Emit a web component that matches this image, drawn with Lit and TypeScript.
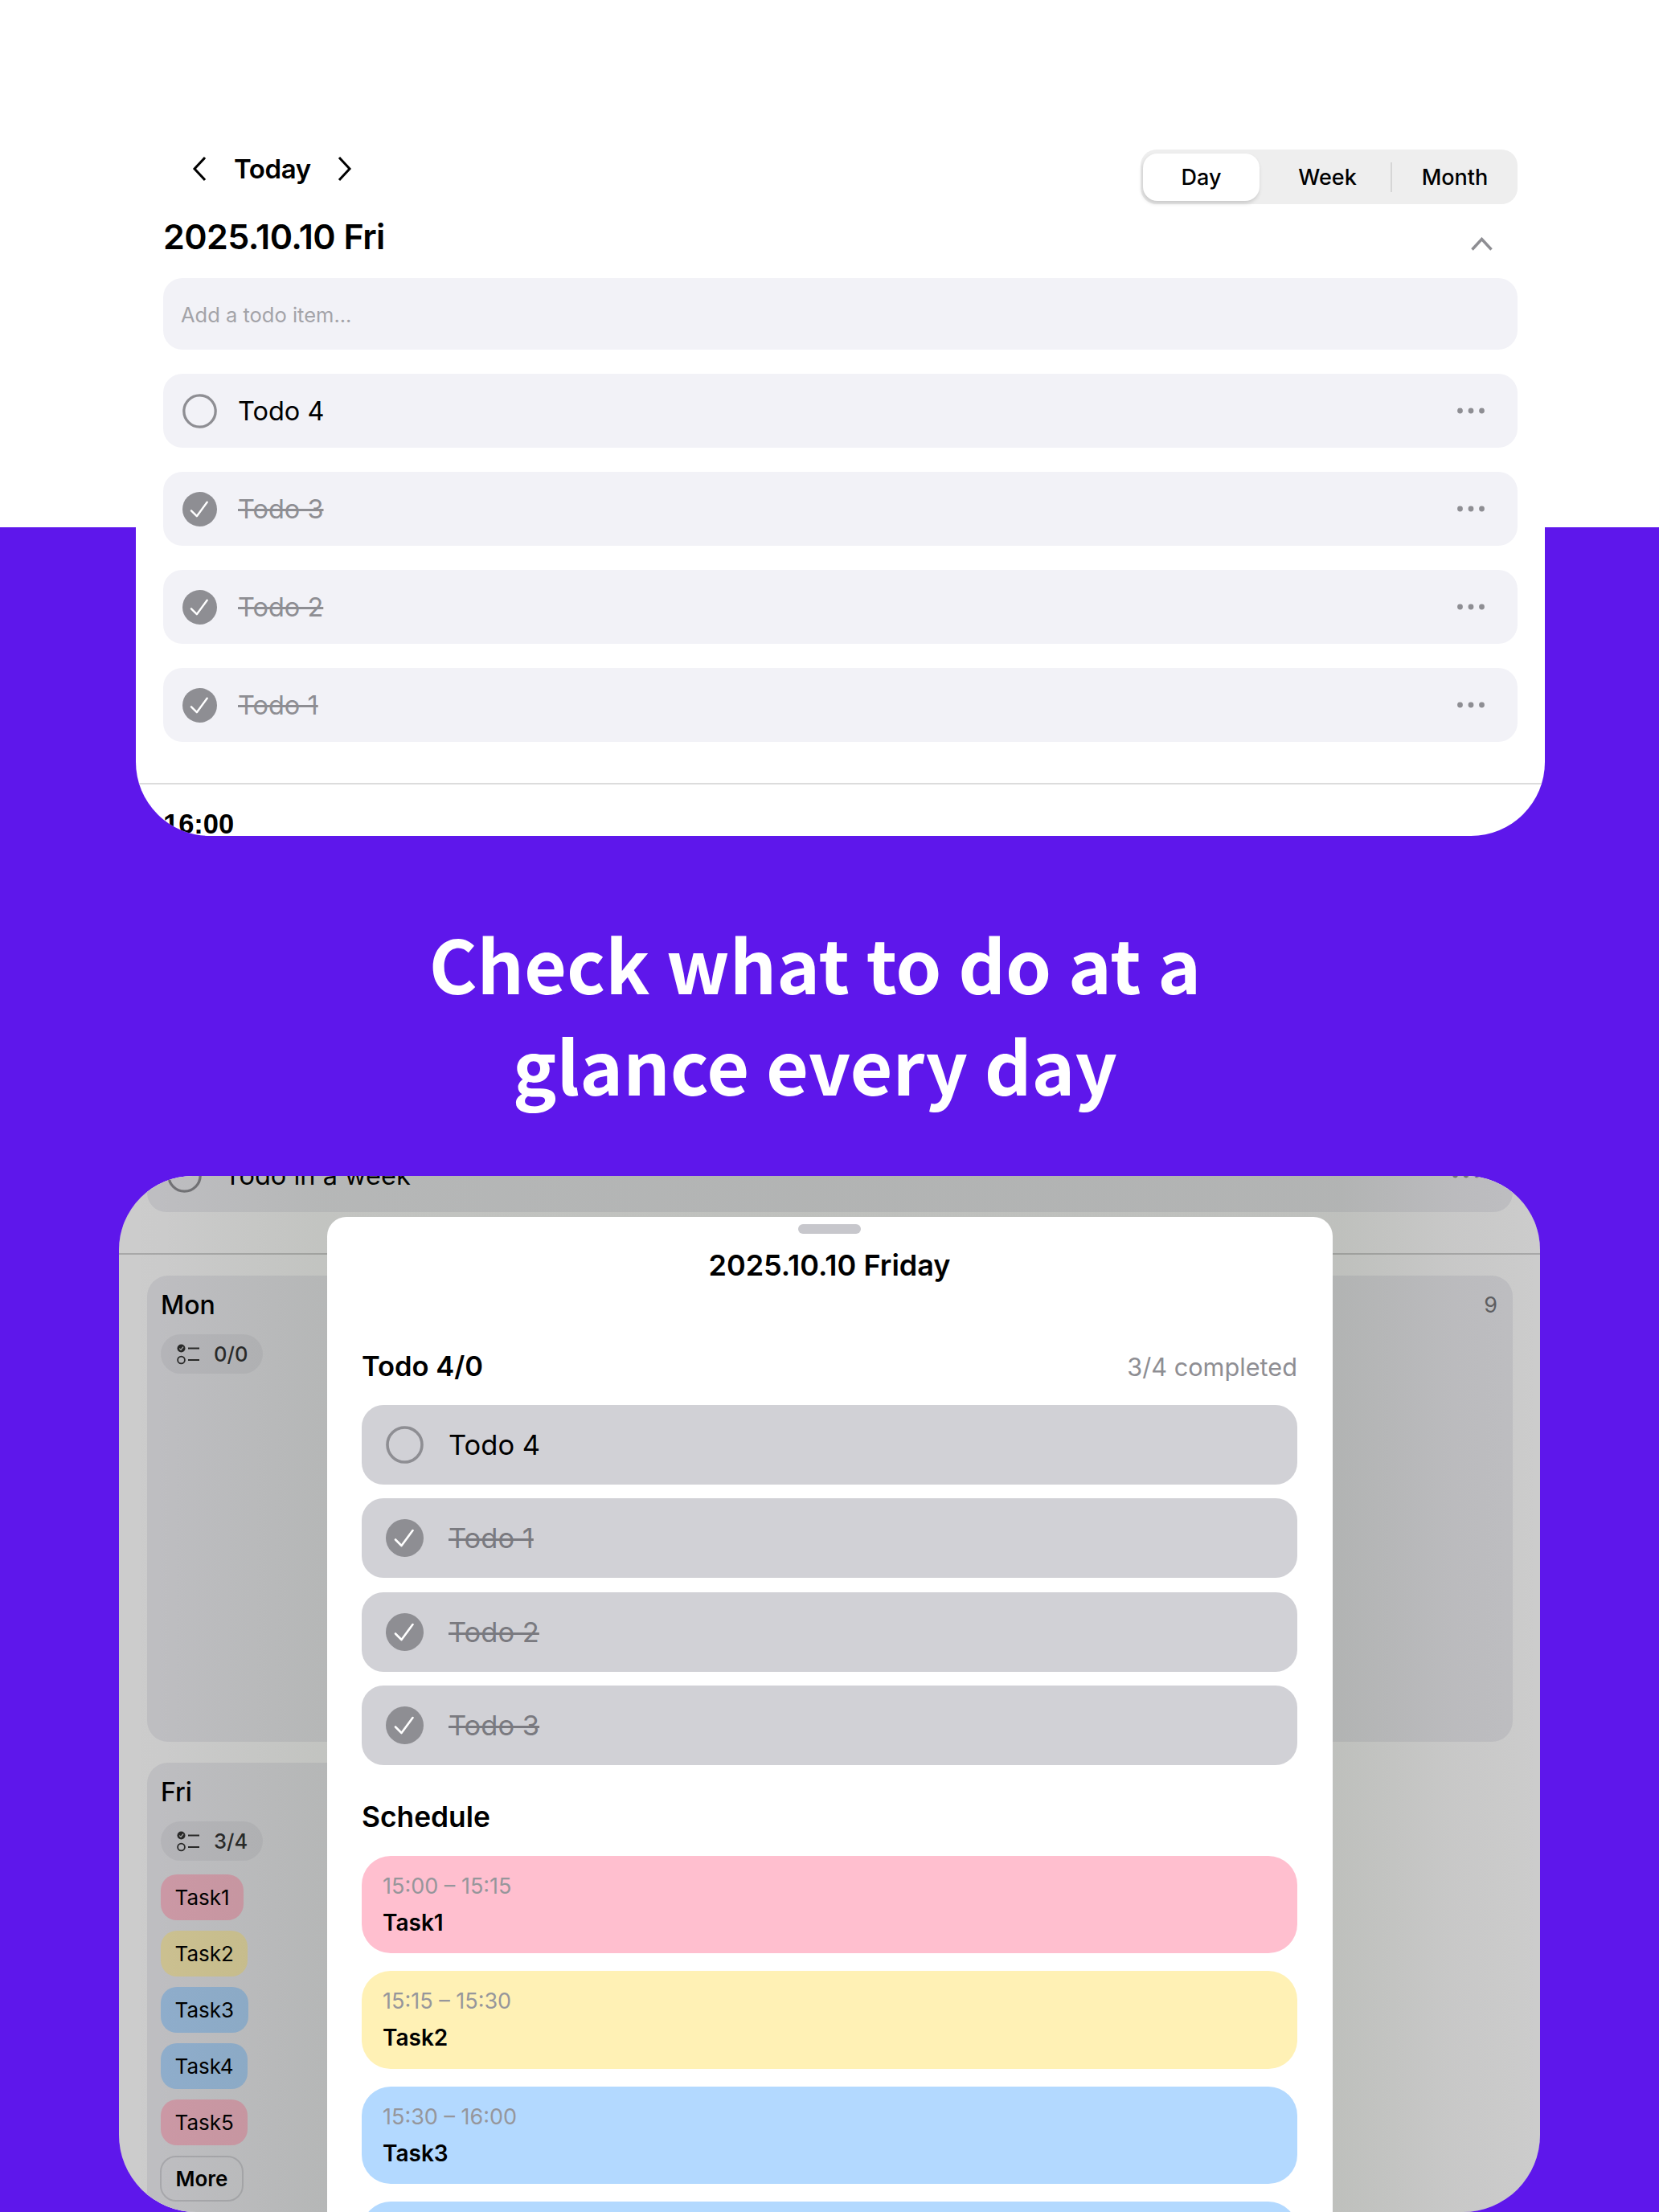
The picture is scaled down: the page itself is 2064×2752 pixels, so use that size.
import { LitElement, html, css, svg } from "lit";
import { customElement } from "lit/decorators.js";

const checkMark = svg`<path d="M12.5 26.5 L20 34 L34 15" fill="none" stroke="#fff" stroke-width="2.6" stroke-linecap="round" stroke-linejoin="round" transform="translate(-.5 -1)"/>`;

function bullet(done: boolean) {
  return done
    ? html`<svg class="bullet" viewBox="0 0 47 47"><circle cx="23.5" cy="23.5" r="23.5" fill="#8e8e93"></circle>${checkMark}</svg>`
    : html`<svg class="bullet" viewBox="0 0 47 47"><circle cx="23.5" cy="23.5" r="21.5" fill="none" stroke="#8e8e93" stroke-width="3.6"></circle></svg>`;
}

const dots = html`<svg class="dots" viewBox="0 0 34 8"><circle cx="3.5" cy="4" r="3.4"></circle><circle cx="17" cy="4" r="3.4"></circle><circle cx="30.5" cy="4" r="3.4"></circle></svg>`;

const tally = html`<svg class="tally" viewBox="0 0 28 27">
  <circle cx="5.5" cy="6.5" r="5" fill="#333"></circle>
  <path d="M3.2 6.6 L5 8.4 L8 4.6" fill="none" stroke="#ddd" stroke-width="1.2"></path>
  <path d="M14 6.5 H28 M14 21 H28" stroke="#333" stroke-width="2"></path>
  <circle cx="5.5" cy="21" r="4.4" fill="none" stroke="#333" stroke-width="1.8"></circle>
</svg>`;

@customElement("app-root")
export class AppRoot extends LitElement {
  static styles = css`
    :host {
      display: block;
      width: 2064px;
      height: 2752px;
      overflow: hidden;
      background: linear-gradient(#fff 656px, #5e17eb 656px);
      font-family: Inter, "Noto Sans", sans-serif;
      color: #000;
    }
    * { box-sizing: border-box; }

    /* top card */
    .card {
      width: 1753px;
      height: 1040px;
      margin-left: 169px;
      padding: 186px 34px 0;
      background: #fff;
      border-radius: 0 0 92px 92px;
      overflow: hidden;
    }
    .head { display: flex; justify-content: space-between; height: 160px; }
    .head-left, .head-right { display: flex; flex-direction: column; }
    .nav { display: flex; align-items: center; height: 48px; margin-left: 36px; }
    .nav svg { width: 18px; height: 32px; }
    .nav span { margin: 0 33px 0 34px; font-size: 33px; font-weight: 600; letter-spacing: -0.4px; }
    .date { margin-top: 32px; font-size: 43px; line-height: 56px; font-weight: 600; letter-spacing: -0.55px; }
    .segment {
      display: flex;
      align-items: center;
      width: 469px;
      height: 68px;
      padding: 0 0 0 3px;
      background: #eeeeee;
      border-radius: 20px;
      font-size: 27px;
      font-weight: 500;
    }
    .seg { text-align: center; line-height: 59px; }
    .seg.day { width: 145px; height: 59px; background: #fff; border-radius: 18px; box-shadow: -1px 3px 5px rgba(0,0,0,.16); }
    .seg.week { width: 157px; margin-left: 6px; }
    .seg.month { flex: 1; }
    .sep { width: 2px; height: 37px; background: #d6d6d6; }
    .collapse { width: 27px; height: 17px; margin: 41px 31px 0 0; align-self: flex-end; }
    .add {
      display: flex;
      align-items: center;
      height: 89px;
      padding: 2px 0 0 22px;
      background: #f2f2f7;
      border-radius: 24px;
      font-size: 25.5px;
      color: #a3a3a8;
    }
    .list { display: flex; flex-direction: column; gap: 30px; margin-top: 30px; }
    .row {
      display: flex;
      align-items: center;
      height: 92px;
      padding: 0 41px 0 24px;
      gap: 26px;
      background: #f2f2f7;
      border-radius: 24px;
      font-size: 32.5px;
    }
    .row .bullet { width: 43px; height: 43px; flex: none; }
    .done { color: #8e8e93; text-decoration: line-through; text-decoration-thickness: 2.5px; }
    .dots { width: 34px; height: 8px; margin-left: auto; fill: #8e8e93; }
    .rule { height: 2px; background: #dcdcdc; }
    .card .rule { margin: 51px -34px 0; }
    .hour { margin-top: 27px; font-family: "Liberation Sans", Arial, sans-serif; font-size: 34.5px; line-height: 44px; font-weight: 700; }

    /* headline */
    .headline {
      height: 423px;
      padding: 94px 36px 0 0;
      text-align: center;
      color: #fff;
      font-family: "Noto Sans CJK KR", "Noto Sans", sans-serif;
      font-size: 91.3px;
      line-height: 126px;
      font-weight: 700;
    }

    /* tablet */
    .tablet {
      position: relative;
      width: 1768px;
      height: 1289px;
      margin-left: 148px;
      padding: 0 34px 0 35px;
      background: #fff;
      border-radius: 92px 92px 96px 96px;
      overflow: hidden;
    }
    .tablet > .row { margin-top: -47px; padding-left: 25px; gap: 28px; background: #eeeef2; }
    .tablet > .rule { margin: 51px -34px 0 -35px; background: #d2d2d2; }
    .cell { margin-top: 26px; padding: 16px 16px 16px 17px; background: #eeeef2; border-radius: 26px; }
    .cell.mon { display: flex; justify-content: space-between; height: 580px; }
    .cell.fri { width: 800px; height: 700px; }
    .cell h3 { margin: 0; font-size: 32px; line-height: 42px; font-weight: 500; }
    .num { margin-right: 3px; font-size: 27px; line-height: 42px; color: #76767a; }
    .tally-pill {
      display: inline-flex;
      align-items: center;
      gap: 18px;
      height: 49px;
      margin-top: 15px;
      padding: 0 19px 0 20px;
      border-radius: 25px;
      background: #e2e2e7;
      color: #333;
      font-size: 25.5px;
      font-weight: 500;
    }
    .tally { width: 28px; height: 27px; }
    .chips { display: flex; flex-direction: column; align-items: flex-start; gap: 13px; margin-top: 17px; }
    .chip { height: 57px; padding: 0 17.5px; border-radius: 20px; font-size: 26px; line-height: 57px; }
    .chip.more { margin-left: -1px; border: 2px solid #d1d1d6; background: transparent; font-weight: 600; line-height: 53px; }
    .pink { background: #ffbfcf; }
    .yellow { background: #fff1b5; }
    .blue { background: #b3d9ff; }

    .scrim {
      position: absolute;
      inset: 0;
      background: linear-gradient(90deg,
        rgba(0,0,0,.2) 0%, rgba(0,0,0,.205) 3%, rgba(14,20,8,.25) 14%,
        rgba(14,20,8,.265) 50%, rgba(14,20,8,.265) 86%, rgba(10,10,8,.225) 94%, rgba(0,0,0,.2) 100%);
    }
    .modal {
      position: absolute;
      left: 259px;
      top: 51px;
      bottom: 0;
      width: 1251px;
      padding: 9px 44px 0 43px;
      background: #fff;
      border-radius: 24px 24px 0 0;
    }
    .handle { width: 78px; height: 12px; margin: 0 auto; border-radius: 6px; background: #c7c7cc; }
    .modal h2 { margin: 16px 0 0; text-align: center; font-size: 36px; line-height: 46px; font-weight: 600; }
    .sect { display: flex; justify-content: space-between; align-items: center; margin-top: 80px; height: 46px; }
    .sect h3 { margin: 0; font-size: 34.5px; line-height: 46px; font-weight: 600; }
    .sched { margin: 42px 0 0; font-size: 35.3px; line-height: 46px; font-weight: 600; }
    .sect span { font-size: 30.7px; color: #8e8e93; }
    .mlist { display: flex; flex-direction: column; gap: 17.3px; margin-top: 25px; }
    .mrow {
      display: flex;
      align-items: center;
      gap: 31px;
      height: 99px;
      padding-left: 30px;
      border-radius: 27px;
      background: #d1d1d6;
      font-size: 34.5px;
    }
    .mrow .bullet { width: 47px; height: 47px; flex: none; }
    .mrow .done { color: #7a7a80; }
    .events { display: flex; flex-direction: column; gap: 22px; margin-top: 25px; }
    .event { height: 121.5px; padding: 21px 26px 0; border-radius: 36px; flex: none; }
    .event .time { font-size: 27px; line-height: 34px; color: #96969b; }
    .event .name { margin-top: 10px; font-size: 28px; line-height: 36px; font-weight: 600; }
  `;

  render() {
    const topTodos = [["Todo 4", false], ["Todo 3", true], ["Todo 2", true], ["Todo 1", true]] as const;
    const modalTodos = [["Todo 4", false], ["Todo 1", true], ["Todo 2", true], ["Todo 3", true]] as const;
    const events = [
      ["15:00 – 15:15", "Task1", "pink"],
      ["15:15 – 15:30", "Task2", "yellow"],
      ["15:30 – 16:00", "Task3", "blue"],
    ];
    const chips = [["Task1", "pink"], ["Task2", "yellow"], ["Task3", "blue"], ["Task4", "blue"], ["Task5", "pink"]];
    return html`
      <section class="card">
        <div class="head">
          <div class="head-left">
            <div class="nav">
              <svg viewBox="0 0 18 32"><path d="M16 2 L3 16 L16 30" fill="none" stroke="#000" stroke-width="3"></path></svg>
              <span>Today</span>
              <svg viewBox="0 0 18 32"><path d="M2 2 L15 16 L2 30" fill="none" stroke="#000" stroke-width="3"></path></svg>
            </div>
            <div class="date">2025.10.10 Fri</div>
          </div>
          <div class="head-right">
            <div class="segment">
              <div class="seg day">Day</div>
              <div class="seg week">Week</div>
              <div class="sep"></div>
              <div class="seg month">Month</div>
            </div>
            <svg class="collapse" viewBox="0 0 27 17"><path d="M1.5 15.5 L13.5 2.5 L25.5 15.5" fill="none" stroke="#8e8e93" stroke-width="3.5"></path></svg>
          </div>
        </div>
        <div class="add">Add a todo item...</div>
        <div class="list">
          ${topTodos.map(([t, d]) => html`<div class="row">${bullet(d)}<span class=${d ? "done" : ""}>${t}</span>${dots}</div>`)}
        </div>
        <div class="rule"></div>
        <div class="hour">16:00</div>
      </section>

      <div class="headline">Check what to do at a<br />glance every day</div>

      <section class="tablet">
        <div class="row">${bullet(false)}<span>Todo in a week</span>${dots}</div>
        <div class="rule"></div>
        <div class="cell mon">
          <div>
            <h3>Mon</h3>
            <div class="tally-pill">${tally}<span>0/0</span></div>
          </div>
          <div class="num">9</div>
        </div>
        <div class="cell fri">
          <h3>Fri</h3>
          <div class="tally-pill">${tally}<span>3/4</span></div>
          <div class="chips">
            ${chips.map(([t, c]) => html`<div class="chip ${c}">${t}</div>`)}
            <div class="chip more">More</div>
          </div>
        </div>
        <div class="scrim"></div>
        <div class="modal">
          <div class="handle"></div>
          <h2>2025.10.10 Friday</h2>
          <div class="sect"><h3>Todo 4/0</h3><span>3/4 completed</span></div>
          <div class="mlist">
            ${modalTodos.map(([t, d]) => html`<div class="mrow">${bullet(d)}<span class=${d ? "done" : ""}>${t}</span></div>`)}
          </div>
          <h3 class="sched">Schedule</h3>
          <div class="events">
            ${events.map(([time, name, c]) => html`<div class="event ${c}"><div class="time">${time}</div><div class="name">${name}</div></div>`)}
            <div class="event blue"></div>
          </div>
        </div>
      </section>
    `;
  }
}
